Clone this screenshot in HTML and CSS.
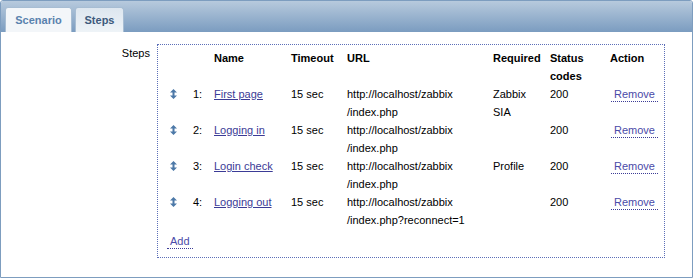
FILE: index.html
```html
<!DOCTYPE html>
<html lang="en">
<head>
  <meta charset="UTF-8">
  <title>Web scenario steps</title>
  <link rel="stylesheet" href="styles.css">
</head>
<body>
  <div class="frame">
    <div class="tabs">
      <a class="tab">Scenario</a>
      <a class="tab tab-active">Steps</a>
    </div>
    <div class="content">
      <div class="label">Steps</div>
      <div class="steps-box">
        <table class="steps">
          <tr class="head">
            <td class="c-drag"></td>
            <td class="c-num"></td>
            <td class="c-name">Name</td>
            <td class="c-timeout">Timeout</td>
            <td class="c-url">URL</td>
            <td class="c-req">Required</td>
            <td class="c-status">Status codes</td>
            <td class="c-action">Action</td>
          </tr>
          <tr>
            <td class="c-drag"><svg class="drag" width="7" height="10" viewBox="0 0 7 10"><path d="M3.5 0L7 3.5H4.5V6.5H7L3.5 10L0 6.5H2.5V3.5H0Z"/></svg></td>
            <td>1:</td>
            <td><a class="name-link">First page</a></td>
            <td>15 sec</td>
            <td>http://localhost/zabbix<br>/index.php</td>
            <td>Zabbix<br>SIA</td>
            <td>200</td>
            <td><a class="act">Remove</a></td>
          </tr>
          <tr>
            <td class="c-drag"><svg class="drag" width="7" height="10" viewBox="0 0 7 10"><path d="M3.5 0L7 3.5H4.5V6.5H7L3.5 10L0 6.5H2.5V3.5H0Z"/></svg></td>
            <td>2:</td>
            <td><a class="name-link">Logging in</a></td>
            <td>15 sec</td>
            <td>http://localhost/zabbix<br>/index.php</td>
            <td></td>
            <td>200</td>
            <td><a class="act">Remove</a></td>
          </tr>
          <tr>
            <td class="c-drag"><svg class="drag" width="7" height="10" viewBox="0 0 7 10"><path d="M3.5 0L7 3.5H4.5V6.5H7L3.5 10L0 6.5H2.5V3.5H0Z"/></svg></td>
            <td>3:</td>
            <td><a class="name-link">Login check</a></td>
            <td>15 sec</td>
            <td>http://localhost/zabbix<br>/index.php</td>
            <td>Profile</td>
            <td>200</td>
            <td><a class="act">Remove</a></td>
          </tr>
          <tr>
            <td class="c-drag"><svg class="drag" width="7" height="10" viewBox="0 0 7 10"><path d="M3.5 0L7 3.5H4.5V6.5H7L3.5 10L0 6.5H2.5V3.5H0Z"/></svg></td>
            <td>4:</td>
            <td><a class="name-link">Logging out</a></td>
            <td>15 sec</td>
            <td>http://localhost/zabbix<br>/index.php?reconnect=1</td>
            <td></td>
            <td>200</td>
            <td><a class="act">Remove</a></td>
          </tr>
          <tr class="add-row">
            <td colspan="8"><a class="act">Add</a></td>
          </tr>
        </table>
      </div>
    </div>
  </div>
</body>
</html>
```

FILE: styles.css
```css
body {
  margin: 0;
  font-family: "Liberation Sans", Arial, sans-serif;
  font-size: 11px;
  color: #000;
  background: #fff;
}
.frame {
  width: 691px;
  height: 276px;
  border: 1px solid #7d9dbf;
  border-radius: 3px 3px 0 0;
  background: #fff;
}
.tabs {
  height: 25px;
  padding: 6px 0 0 4px;
  display: flex;
  gap: 3px;
  background: linear-gradient(#b7cadd, #7b9cc0);
  border-radius: 2px 2px 0 0;
}
.tab {
  display: block;
  height: 25px;
  box-sizing: border-box;
  width: 67px;
  text-align: center;
  line-height: 24px;
  font-size: 11px;
  font-weight: bold;
  color: #5a82ae;
  background: #f3f6f9;
  border: 1px solid #a7bdd3;
  border-bottom: none;
  border-radius: 3px 3px 0 0;
}
.tab-active {
  width: 49px;
  color: #3d5a7c;
  background: linear-gradient(#dde6ef, #eef3f7);
}
.content {
  display: flex;
  padding-top: 12px;
}
.label {
  width: 149px;
  padding-top: 2px;
  text-align: right;
  line-height: 14px;
}
.steps-box {
  margin-left: 7px;
  width: 508px;
  height: 214px;
  border: 1px dotted #5c6fb8;
  padding: 4px 0 0 10px;
  box-sizing: border-box;
}
.steps {
  border-collapse: collapse;
}
.steps td {
  padding: 0 0 0 2px;
  line-height: 18px;
  vertical-align: top;
  white-space: nowrap;
}
.head td {
  font-weight: bold;
  white-space: normal;
}
.c-drag { width: 21px; }
.c-num { width: 19px; }
.c-name { width: 75px; }
.c-timeout { width: 54px; }
.c-url { width: 144px; }
.c-req { width: 55px; }
.c-status { width: 58px; }
.c-action { width: 48px; }
.drag {
  display: block;
  margin-top: 4px;
  fill: #4d79a8;
}
.name-link {
  color: #3b3b96;
  text-decoration: underline;
}
.act {
  color: #4a4aa8;
  text-decoration: none;
  padding: 0 3px 1px;
  border-bottom: 1px dotted #3b3b96;
  margin-left: 1px;
}
.add-row td {
  padding: 3px 0 0 0;
}
.add-row .act {
  margin-left: -1px;
}
```
